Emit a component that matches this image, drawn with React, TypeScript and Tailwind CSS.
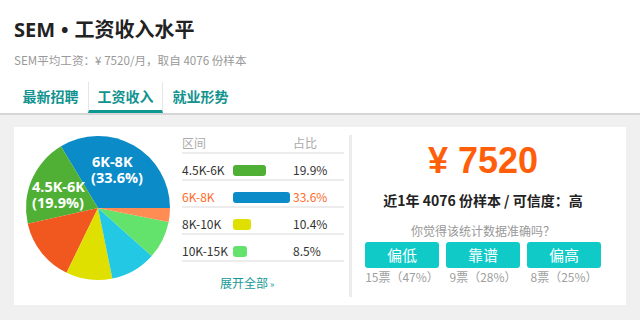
import React from "react";

const SLICES = [
  { v: 33.6, c: "#0b8bc8" },
  { v: 19.9, c: "#50b035" },
  { v: 14.3, c: "#f0581f" },
  { v: 10.4, c: "#dfe000" },
  { v: 10.2, c: "#22c8e4" },
  { v: 8.5, c: "#63e26c" },
  { v: 3.1, c: "#ff8c52" },
];

const ROWS = [
  { label: "4.5K-6K", pct: "19.9%", bar: "w-[33px] bg-[#50b035]", hi: false },
  { label: "6K-8K", pct: "33.6%", bar: "w-[57px] bg-[#0b8bc8]", hi: true },
  { label: "8K-10K", pct: "10.4%", bar: "w-[18px] bg-[#dfe000]", hi: false },
  { label: "10K-15K", pct: "8.5%", bar: "w-[14px] bg-[#63e26c]", hi: false },
];

const VOTES = [
  { label: "偏低", count: "15票（47%）" },
  { label: "靠谱", count: "9票（28%）" },
  { label: "偏高", count: "8票（25%）" },
];

const TABS = ["最新招聘", "工资收入", "就业形势"];

function Pie() {
  const cx = 84;
  const cy = 81;
  const r = 72;
  let start = 0;
  const pt = (a: number) => {
    const rad = (a * Math.PI) / 180;
    return `${(cx + r * Math.cos(rad)).toFixed(2)} ${(cy - r * Math.sin(rad)).toFixed(2)}`;
  };
  return (
    <svg width="168" height="178" viewBox="0 0 168 178">
      {SLICES.map((s, i) => {
        const sweep = (s.v / 100) * 360;
        const end = start + sweep;
        const d = `M ${cx} ${cy} L ${pt(start)} A ${r} ${r} 0 ${sweep > 180 ? 1 : 0} 0 ${pt(end)} Z`;
        start = end;
        return <path key={i} d={d} fill={s.c} />;
      })}
      <g fill="#fff" fontWeight="700" fontSize="14.5" fontFamily="'Open Sans', sans-serif">
        <text x="78" y="40">6K-8K</text>
        <text x="77" y="56">(33.6%)</text>
        <text x="18" y="65">4.5K-6K</text>
        <text x="18" y="81">(19.9%)</text>
      </g>
    </svg>
  );
}

export default function App() {
  return (
    <div className="w-[640px] h-[320px] overflow-hidden bg-[#f0f0f0] font-['Noto_Sans_CJK_SC','Open_Sans',sans-serif]">
      {/* header */}
      <div className="bg-white h-[115px] border-b-2 border-[#d6d6d6]">
        <h1 className="pl-[14px] pt-[15px] text-[20px] leading-[30px] font-bold text-[#222] font-['Open_Sans','Noto_Sans_CJK_SC',sans-serif]">
          SEM<span className="mx-[6px]">•</span>工资收入水平
        </h1>
        <p className="pl-[14px] mt-[5px] text-[11.6px] leading-[20px] text-[#999]">
          SEM平均工资：¥ 7520/月，取自 4076 份样本
        </p>
        <div className="flex pl-[13px] mt-[12px]">
          {TABS.map((t, i) => (
            <div
              key={t}
              className={
                i === 1
                  ? "w-[75px] h-[31px] text-center text-[14px] leading-[28px] font-bold text-[#12938f] border-x border-[#e6e6e6] border-b-[3px] border-b-[#0e9892]"
                  : "w-[75px] h-[31px] text-center text-[14px] leading-[28px] font-bold text-[#12938f] border-x border-transparent"
              }
            >
              {t}
            </div>
          ))}
        </div>
      </div>

      {/* card */}
      <div className="px-[14px] pt-[12px]">
        <div className="bg-white h-[178px] flex">
          <div className="w-[168px] shrink-0">
            <Pie />
          </div>

          <div className="w-[162px] shrink-0 text-[12px]">
            <div className="flex h-[27px] pt-[7px] leading-[18px] border-b-2 border-[#ececec] text-[#aaa]">
              <span className="w-[111px]">区间</span>
              <span>占比</span>
            </div>
            {ROWS.map((r) => (
              <div
                key={r.label}
                className={`flex h-[27px] pt-[7px] leading-[18px] border-b-2 border-[#ececec] ${r.hi ? "text-[#ff6a2b]" : "text-[#333]"}`}
              >
                <span className="w-[51px]">{r.label}</span>
                <span className="w-[60px] flex items-center">
                  <span className={`h-[11px] rounded-[3px] ${r.bar}`} />
                </span>
                <span>{r.pct}</span>
              </div>
            ))}
            <div className="mt-[12px] pl-[38px] leading-[18px] text-[#169a96]">
              展开全部<span className="ml-[2px] text-[9px]">»</span>
            </div>
          </div>

          <div className="ml-[5px] w-[3px] my-[8px] bg-[#ececec]" />

          <div className="flex-1 pr-[12px] flex flex-col items-center">
            <div className="mt-[14px] text-[36px] leading-[40px] font-bold text-[#ff5e0a] font-['Liberation_Sans',Arial,sans-serif]">
              ¥ 7520
            </div>
            <div className="mt-[9px] text-[14px] leading-[20px] font-bold text-[#222]">
              近1年 4076 份样本 / 可信度：高
            </div>
            <div className="mt-[12px] text-[12px] leading-[18px] text-[#999]">
              你觉得该统计数据准确吗？
            </div>
            <div className="mt-[2px] flex gap-[7px]">
              {VOTES.map((v) => (
                <div key={v.label} className="w-[74px] flex flex-col items-center">
                  <button className="w-[74px] h-[26px] rounded-[3px] bg-[#10cac7] text-white text-[15px] leading-[26px]">
                    {v.label}
                  </button>
                  <span className="mt-[1px] text-[12px] leading-[16px] text-[#a0a0a0]">{v.count}</span>
                </div>
              ))}
            </div>
          </div>
        </div>
      </div>
    </div>
  );
}
